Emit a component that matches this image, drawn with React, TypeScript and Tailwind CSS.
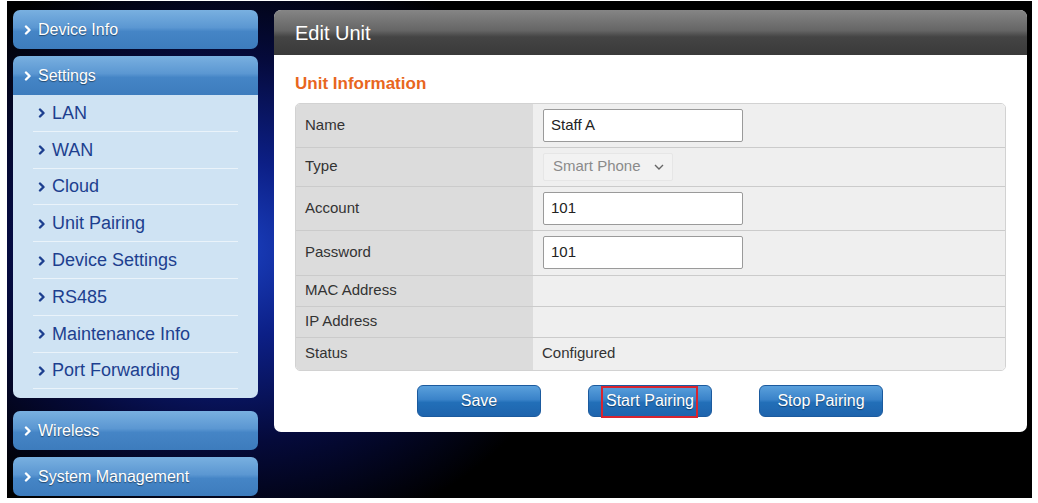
import React from 'react';

const SUB = ['LAN', 'WAN', 'Cloud', 'Unit Pairing', 'Device Settings', 'RS485', 'Maintenance Info', 'Port Forwarding'];

function Chevron({ className = '' }: { className?: string }) {
  return (
    <svg viewBox="0 0 8 10" className={className} aria-hidden="true">
      <path d="M2 1.5 L5.5 5 L2 8.5" fill="none" stroke="currentColor" strokeWidth={2.4} strokeLinecap="round" strokeLinejoin="round" />
    </svg>
  );
}

function NavButton({ label, open = false }: { label: string; open?: boolean }) {
  return (
    <div
      className={`flex h-[39px] items-center gap-[6px] pl-[11px] text-[16px] text-white [text-shadow:0_1px_1px_rgba(0,0,0,0.45)] bg-[linear-gradient(#79b0e0_0%,#5b97d2_45%,#4585c6_55%,#3d7cbd_100%)] ${
        open ? 'rounded-t-[7px]' : 'rounded-[7px]'
      }`}
    >
      <Chevron className="h-[10px] w-[8px] text-white" />
      <span>{label}</span>
    </div>
  );
}

function Row({ label, h, children, last = false }: { label: string; h: string; children?: React.ReactNode; last?: boolean }) {
  return (
    <div className={`flex ${h} ${last ? '' : 'border-b border-[#cbcbcb]'}`}>
      <div className="flex w-[237px] items-center bg-[#dcdcdc] pl-[9px] text-[15px] text-[#333]">{label}</div>
      <div className="flex flex-1 items-center bg-[#efefef] pl-[10px] text-[15px] text-[#333]">{children}</div>
    </div>
  );
}

function TextBox({ value }: { value: string }) {
  return (
    <div className="flex h-[33px] w-[200px] items-center rounded-[2px] border border-[#9a9a9a] bg-white pl-[7px] text-[15px] text-[#222]">
      {value}
    </div>
  );
}

function BlueButton({ label, marked = false }: { label: string; marked?: boolean }) {
  return (
    <div className="relative flex h-[32px] w-[124px] items-center justify-center rounded-[6px] border border-[#1b5a9e] text-[16px] text-white [text-shadow:0_1px_1px_rgba(0,0,0,0.4)] bg-[linear-gradient(#5aa0dc_0%,#3a83c9_45%,#226fb8_55%,#1e64ad_100%)]">
      {label}
      {marked && <div className="absolute left-[12px] top-[0px] h-[32px] w-[97px] border-2 border-[#d8242f]" />}
    </div>
  );
}

export default function App() {
  return (
    <div className="h-[503px] w-[1038px] bg-white pb-[5px] pl-[7px] pr-[6px] pt-[1px] [font-family:'Liberation_Sans',Arial,sans-serif]">
      <div className="flex h-full gap-[16px] bg-[radial-gradient(ellipse_35%_60%_at_22%_50%,#1a40c0_0%,#0c1f86_30%,#050a3a_65%,#000_100%)] pl-[6px] pt-[9px]">
        {/* sidebar */}
        <div className="flex w-[245px] flex-col">
          <NavButton label="Device Info" />
          <div className="mt-[7px]">
            <NavButton label="Settings" open />
            <div className="rounded-b-[7px] bg-[#cfe3f3] pb-[9px]">
              {SUB.map((s) => (
                <div key={s} className="mx-[20px] flex h-[36.8px] items-center gap-[6px] border-b border-[#eaf3fa] pl-[5px] pt-[1px] text-[18px] text-[#1d3f8f]">
                  <Chevron className="h-[10px] w-[8px] text-[#1d3f8f]" />
                  <span>{s}</span>
                </div>
              ))}
            </div>
          </div>
          <div className="mt-[13px]">
            <NavButton label="Wireless" />
          </div>
          <div className="mt-[7px]">
            <NavButton label="System Management" />
          </div>
        </div>

        {/* main panel */}
        <div className="flex h-[422px] w-[753px] flex-col overflow-hidden rounded-[7px] bg-white">
          <div className="flex h-[45px] items-center bg-[linear-gradient(#858585_0%,#666_45%,#444_60%,#3a3a3a_100%)] pl-[21px] text-[20px] text-white">
            Edit Unit
          </div>
          <div className="px-[21px] pt-[16px]">
            <div className="text-[17px] font-bold text-[#e8661e]">Unit Information</div>
            <div className="mt-[6px] w-[711px] overflow-hidden rounded-[5px] border border-[#d2d2d2]">
              <Row label="Name" h="h-[44px]">
                <TextBox value="Staff A" />
              </Row>
              <Row label="Type" h="h-[39px]">
                <div className="flex h-[28px] w-[130px] items-center justify-between rounded-[2px] border border-[#e6e6e6] bg-[#f2f2f2] pl-[9px] pr-[8px] text-[15px] text-[#8a8a8a]">
                  <span>Smart Phone</span>
                  <svg viewBox="0 0 10 6" className="h-[6px] w-[10px]" aria-hidden="true">
                    <path d="M1 1 L5 5 L9 1" fill="none" stroke="#666" strokeWidth={1.4} />
                  </svg>
                </div>
              </Row>
              <Row label="Account" h="h-[44px]">
                <TextBox value="101" />
              </Row>
              <Row label="Password" h="h-[45px]">
                <TextBox value="101" />
              </Row>
              <Row label="MAC Address" h="h-[31px]" />
              <Row label="IP Address" h="h-[31px]" />
              <Row label="Status" h="h-[32px]" last>
                <span className="-ml-[1px]">Configured</span>
              </Row>
            </div>
            <div className="mt-[14px] flex gap-[47px] pl-[122px]">
              <BlueButton label="Save" />
              <BlueButton label="Start Pairing" marked />
              <BlueButton label="Stop Pairing" />
            </div>
          </div>
        </div>
      </div>
    </div>
  );
}
